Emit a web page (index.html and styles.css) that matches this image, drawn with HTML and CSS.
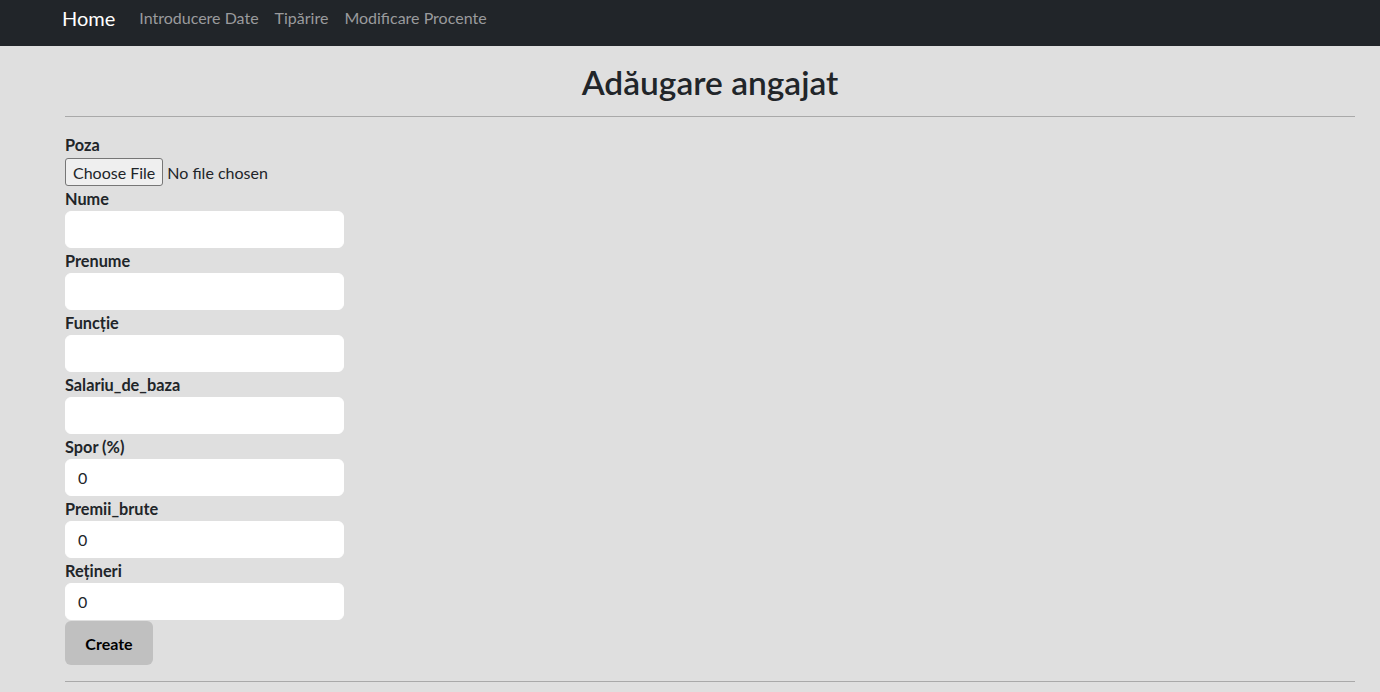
FILE: index.html
```html
<!DOCTYPE html>
<html lang="ro">
<head>
<meta charset="utf-8">
<title>Adăugare angajat</title>
<link rel="stylesheet" href="styles.css">
</head>
<body>
<nav class="navbar">
  <div class="nav-inner">
    <a class="brand" href="#">Home</a>
    <a class="nav-link" href="#">Introducere Date</a>
    <a class="nav-link" href="#">Tipărire</a>
    <a class="nav-link" href="#">Modificare Procente</a>
  </div>
</nav>
<main class="container">
  <h1 class="title">Adăugare angajat</h1>
  <hr class="rule">
  <form class="form">
    <label class="label">Poza</label>
    <input class="file" type="file">
    <label class="label">Nume</label>
    <input class="field" type="text">
    <label class="label">Prenume</label>
    <input class="field" type="text">
    <label class="label">Funcție</label>
    <input class="field" type="text">
    <label class="label">Salariu_de_baza</label>
    <input class="field" type="text">
    <label class="label">Spor (%)</label>
    <input class="field" type="text" value="0">
    <label class="label">Premii_brute</label>
    <input class="field" type="text" value="0">
    <label class="label">Rețineri</label>
    <input class="field" type="text" value="0">
    <button class="btn" type="button">Create</button>
  </form>
  <hr class="rule rule-end">
</main>
</body>
</html>
```

FILE: styles.css
```css
* { box-sizing: border-box; }
html, body { margin: 0; padding: 0; }
body {
  background: #dfdfdf;
  color: #212529;
  font-family: "Lato", "Open Sans", sans-serif;
  font-size: 16px;
  line-height: 1.5;
}
.navbar {
  background: #212529;
  height: 46px;
}
.nav-inner {
  display: flex;
  align-items: center;
  height: 36px;
  padding-left: 62px;
}
.brand {
  color: #fff;
  text-decoration: none;
  font-size: 20px;
  margin-right: 16px;
}
.nav-link {
  color: #9a9b9d;
  text-decoration: none;
  padding: 0 8px;
}
.container {
  margin: 0 25px 0 65px;
}
.title {
  margin: 17px 0 0;
  text-align: center;
  font-size: 33.5px;
  font-weight: 600;
  line-height: 38px;
}
.rule {
  border: 0;
  border-top: 1px solid #a9a9a9;
  margin: 15px 0 16px;
}
.rule-end {
  margin-top: 16px;
}
.form {
  display: flex;
  flex-direction: column;
  align-items: flex-start;
}
.label {
  font-weight: 700;
  font-size: 16.3px;
  height: 24px;
}
.file {
  font-family: inherit;
  font-size: 16px;
  height: 30px;
  color: #212529;
}
.file::file-selector-button {
  font-family: inherit;
  font-size: 16px;
  height: 28px;
  padding: 0 7px;
  margin: 1px 4px 1px 0;
  border: 1px solid #767676;
  border-radius: 3px;
  background: #efefef;
  color: #212529;
}
.field {
  width: 279px;
  height: 37px;
  margin-bottom: 1px;
  border: 1px solid #fff;
  border-radius: 6px;
  background: #fff;
  padding: 6px 12px;
  font-family: inherit;
  font-size: 16px;
  color: #212529;
}
.btn {
  width: 88px;
  height: 44px;
  border: 0;
  border-radius: 6px;
  background: #c0c0c0;
  font-family: inherit;
  font-weight: 700;
  font-size: 16px;
  color: #000;
}
```
